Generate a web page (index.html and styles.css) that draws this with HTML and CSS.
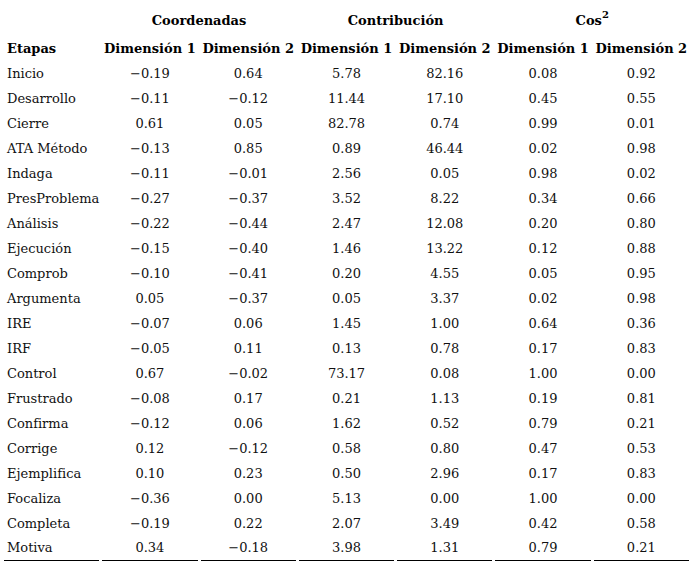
FILE: index.html
```html
<!DOCTYPE html>
<html lang="es">
<head>
<meta charset="utf-8">
<title>Tabla</title>
<link rel="stylesheet" href="styles.css">
</head>
<body>
<table class="tbl">
  <colgroup>
    <col class="c"><col class="c"><col class="c"><col class="c"><col class="c"><col class="c"><col class="c">
  </colgroup>
  <thead>
    <tr class="group">
      <th></th>
      <th colspan="2">Coordenadas</th>
      <th colspan="2">Contribución</th>
      <th colspan="2">Cos<sup>2</sup></th>
    </tr>
    <tr class="sub">
      <th class="lbl">Etapas</th>
      <th>Dimensión 1</th><th>Dimensión 2</th>
      <th>Dimensión 1</th><th>Dimensión 2</th>
      <th>Dimensión 1</th><th>Dimensión 2</th>
    </tr>
  </thead>
  <tbody>
    <tr><td class="lbl">Inicio</td><td>−0.19</td><td>0.64</td><td>5.78</td><td>82.16</td><td>0.08</td><td>0.92</td></tr>
    <tr><td class="lbl">Desarrollo</td><td>−0.11</td><td>−0.12</td><td>11.44</td><td>17.10</td><td>0.45</td><td>0.55</td></tr>
    <tr><td class="lbl">Cierre</td><td>0.61</td><td>0.05</td><td>82.78</td><td>0.74</td><td>0.99</td><td>0.01</td></tr>
    <tr><td class="lbl">ATA Método</td><td>−0.13</td><td>0.85</td><td>0.89</td><td>46.44</td><td>0.02</td><td>0.98</td></tr>
    <tr><td class="lbl">Indaga</td><td>−0.11</td><td>−0.01</td><td>2.56</td><td>0.05</td><td>0.98</td><td>0.02</td></tr>
    <tr><td class="lbl">PresProblema</td><td>−0.27</td><td>−0.37</td><td>3.52</td><td>8.22</td><td>0.34</td><td>0.66</td></tr>
    <tr><td class="lbl">Análisis</td><td>−0.22</td><td>−0.44</td><td>2.47</td><td>12.08</td><td>0.20</td><td>0.80</td></tr>
    <tr><td class="lbl">Ejecución</td><td>−0.15</td><td>−0.40</td><td>1.46</td><td>13.22</td><td>0.12</td><td>0.88</td></tr>
    <tr><td class="lbl">Comprob</td><td>−0.10</td><td>−0.41</td><td>0.20</td><td>4.55</td><td>0.05</td><td>0.95</td></tr>
    <tr><td class="lbl">Argumenta</td><td>0.05</td><td>−0.37</td><td>0.05</td><td>3.37</td><td>0.02</td><td>0.98</td></tr>
    <tr><td class="lbl">IRE</td><td>−0.07</td><td>0.06</td><td>1.45</td><td>1.00</td><td>0.64</td><td>0.36</td></tr>
    <tr><td class="lbl">IRF</td><td>−0.05</td><td>0.11</td><td>0.13</td><td>0.78</td><td>0.17</td><td>0.83</td></tr>
    <tr><td class="lbl">Control</td><td>0.67</td><td>−0.02</td><td>73.17</td><td>0.08</td><td>1.00</td><td>0.00</td></tr>
    <tr><td class="lbl">Frustrado</td><td>−0.08</td><td>0.17</td><td>0.21</td><td>1.13</td><td>0.19</td><td>0.81</td></tr>
    <tr><td class="lbl">Confirma</td><td>−0.12</td><td>0.06</td><td>1.62</td><td>0.52</td><td>0.79</td><td>0.21</td></tr>
    <tr><td class="lbl">Corrige</td><td>0.12</td><td>−0.12</td><td>0.58</td><td>0.80</td><td>0.47</td><td>0.53</td></tr>
    <tr><td class="lbl">Ejemplifica</td><td>0.10</td><td>0.23</td><td>0.50</td><td>2.96</td><td>0.17</td><td>0.83</td></tr>
    <tr><td class="lbl">Focaliza</td><td>−0.36</td><td>0.00</td><td>5.13</td><td>0.00</td><td>1.00</td><td>0.00</td></tr>
    <tr><td class="lbl">Completa</td><td>−0.19</td><td>0.22</td><td>2.07</td><td>3.49</td><td>0.42</td><td>0.58</td></tr>
    <tr class="last"><td class="lbl">Motiva</td><td>0.34</td><td>−0.18</td><td>3.98</td><td>1.31</td><td>0.79</td><td>0.21</td></tr>
  </tbody>
</table>
</body>
</html>
```

FILE: styles.css
```css
html, body {
  margin: 0;
  padding: 0;
  background: #ffffff;
}

.tbl {
  margin: 0 0 0 1px;
  width: 691px;
  table-layout: fixed;
  border-collapse: separate;
  border-spacing: 3px 0;
  font-family: "DejaVu Serif", "Liberation Serif", serif;
  font-size: 13px;
  color: #111;
}

.tbl th,
.tbl td {
  padding: 0;
  text-align: center;
  white-space: nowrap;
  vertical-align: middle;
}

.tbl th {
  font-weight: bold;
  color: #000;
}

.group th {
  padding-top: 6px;
  height: 30px;
  line-height: 30px;
}

.group sup {
  font-size: 10px;
  line-height: 0;
  vertical-align: 7px;
}

.sub th {
  height: 25px;
  line-height: 25px;
}

.tbl td {
  height: 25px;
  line-height: 25px;
  font-weight: normal;
}

.tbl .lbl {
  text-align: left;
  padding-left: 3px;
}

.last td {
  height: 24px;
  line-height: 24px;
  vertical-align: top;
  border-bottom: 1px solid #000;
}
```
